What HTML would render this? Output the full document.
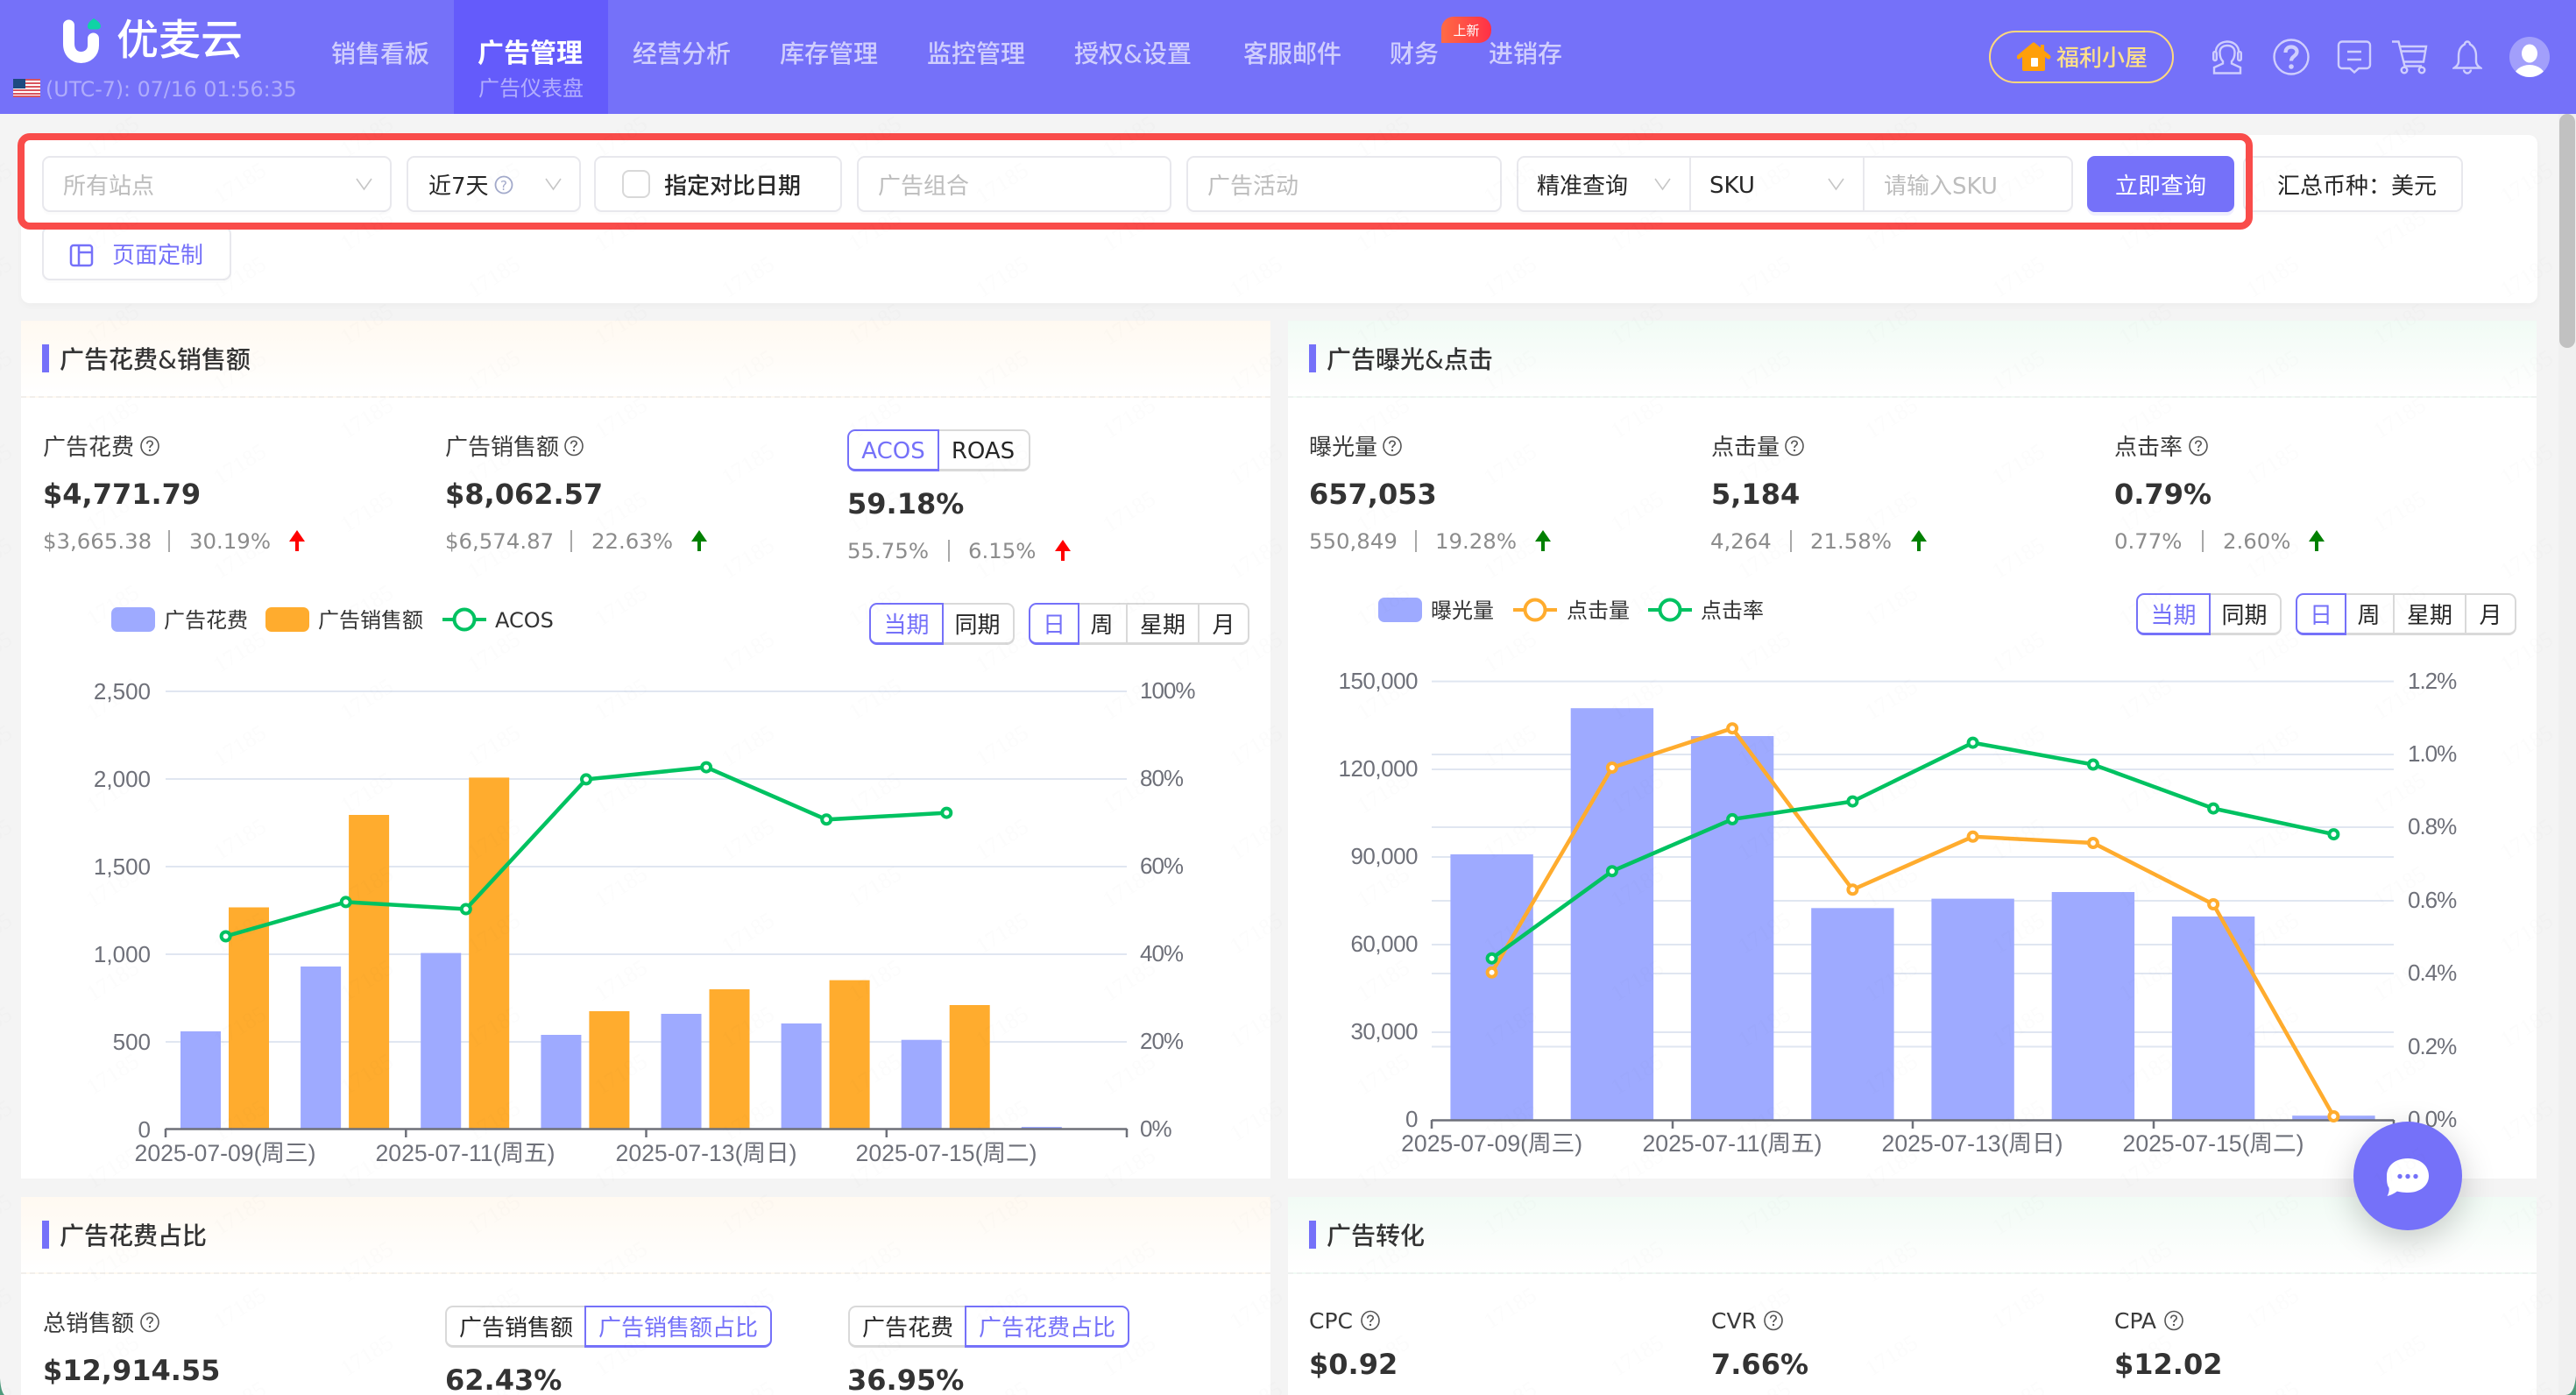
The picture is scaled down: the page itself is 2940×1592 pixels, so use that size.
<!DOCTYPE html>
<html lang="zh"><head><meta charset="utf-8"><title>优麦云 广告仪表盘</title>
<style>
*{box-sizing:border-box;margin:0;padding:0}
html,body{width:2940px;height:1592px;overflow:hidden;background:#f4f4f4}
body{position:relative;font-family:"DejaVu Sans","Noto Sans CJK SC",sans-serif;color:#262626}
.a{position:absolute;white-space:nowrap}
.c{position:absolute;display:flex;align-items:center;justify-content:center;white-space:nowrap}
.l{position:absolute;display:flex;align-items:center;white-space:nowrap}
.hdr{left:0;top:0;width:2940px;height:130px;background:#7571f9}
.nav{font-size:28px;font-weight:500;color:rgba(255,255,255,.66);top:42px;height:40px;line-height:40px}
.box{position:absolute;background:#fff;border:2px solid #e8e8ed;border-radius:9px;font-size:26px;display:flex;align-items:center;white-space:nowrap;box-shadow:0 3px 0 rgba(0,0,0,.012)}
.ph{color:#bdbdbd}
.card{position:absolute;background:#fff}
.phead{position:absolute;left:0;top:0;width:100%;height:88px;border-bottom:2px dashed #f2efeb}
.bar{position:absolute;left:24px;top:27px;width:8px;height:32px;background:#7571f9}
.title{position:absolute;left:44px;top:25px;height:40px;line-height:40px;font-size:28px;font-weight:500;color:#333;white-space:nowrap}
.tg{position:absolute;background:#fff;border:2px solid #d9d9d9;font-size:26px;display:flex;align-items:center;justify-content:center;white-space:nowrap;color:#262626;border-bottom-width:3px}
.on{border-color:#7571f9;color:#7571f9;z-index:2}
svg{position:absolute;left:0;top:0}
.chev{position:absolute;width:20px;height:14px}
</style></head><body>

<div class="a hdr"></div>
<div class="a" style="left:518px;top:0;width:176px;height:130px;background:#645bfb"></div>

<svg width="130" height="130" style="left:0;top:0">
<path d="M78.500 29V50C78.500 60 85 65.500 92.500 65.500C100 65.500 106.500 60 106.500 52V44" fill="none" stroke="#fff" stroke-width="13" stroke-linecap="round"/>
<path d="M107 21C110 23 115 26 115 30C115 32 113 33.500 111 33.500H103C101 33.500 100 32 100 30C100 26 104 23 107 21Z" fill="#0fd3a5"/>
</svg>
<div class="a" style="left:133px;top:14px;font-size:48px;line-height:64px;color:#fff;font-weight:500">优麦云</div>
<svg width="50" height="24" style="left:15px;top:90px">
<rect width="31" height="21" fill="#fff"/><g fill="#d8555f"><rect y="0" width="31" height="2"/><rect y="4" width="31" height="2"/><rect y="8" width="31" height="2"/><rect y="12" width="31" height="2"/><rect y="16" width="31" height="2"/><rect y="19" width="31" height="2"/></g><rect width="14" height="11" fill="#1d4a80"/>
</svg>
<div class="a" style="left:52px;top:86px;font-size:23.700px;line-height:32px;color:rgba(255,255,255,.42)">(UTC-7): 07/16 01:56:35</div>

<div class="a nav" style="left:378px">销售看板</div>
<div class="a" style="left:545px;top:42px;font-size:30px;line-height:40px;font-weight:700;color:#fff">广告管理</div>
<div class="a" style="left:546px;top:85px;font-size:24px;line-height:32px;color:rgba(255,255,255,.5)">广告仪表盘</div>
<div class="a nav" style="left:722px">经营分析</div>
<div class="a nav" style="left:890px">库存管理</div>
<div class="a nav" style="left:1058px">监控管理</div>
<div class="a nav" style="left:1226px">授权&amp;设置</div>
<div class="a nav" style="left:1419px">客服邮件</div>
<div class="a nav" style="left:1586px">财务</div>
<div class="a nav" style="left:1699px">进销存</div>
<div class="c" style="left:1645px;top:19px;width:57px;height:30px;background:linear-gradient(90deg,#ff6b45,#ff3046);border-radius:14px 14px 14px 0;color:#fff;font-size:15px">上新</div>

<div class="a" style="left:2270px;top:35px;width:211px;height:60px;border:2px solid #ffd97d;border-radius:30px"></div>
<svg width="40" height="36" style="left:2302px;top:48px">
<rect x="6" y="12" width="26" height="21" rx="2" fill="#ff9f0a"/>
<path d="M2 17L19 3L36 17" fill="none" stroke="#ff9f0a" stroke-width="5" stroke-linecap="round" stroke-linejoin="round"/>
<path d="M6 14L19 3L32 14Z" fill="#ff9f0a"/><rect x="27" y="3" width="4" height="8" fill="#ff9f0a"/>
<rect x="16" y="18" width="8" height="10" rx="1" fill="#fff"/>
</svg>
<div class="a" style="left:2347px;top:47px;font-size:26px;line-height:40px;color:#ffe08a;font-weight:500">福利小屋</div>

<svg width="34" height="39" viewBox="0 0 34 39" style="left:2525px;top:46px" fill="none" stroke="#cfcefd" stroke-width="2.400">
<path d="M4 13C4 6 10 1.500 17 1.500C24 1.500 30 6 30 13"/>
<path d="M8.500 14C8.500 8.500 12 6 17 6C22 6 25.500 8.500 25.500 14C25.500 19 24 22 22 24V26.500L32 31V37.500H2V31L12 26.500V24C10 22 8.500 19 8.500 14Z"/>
<rect x="1.200" y="13" width="3.600" height="10" rx="1.800"/><rect x="29.200" y="13" width="3.600" height="10" rx="1.800"/>
</svg>
<svg width="42" height="42" viewBox="0 0 42 42" style="left:2594px;top:44px" fill="none" stroke="#cfcefd">
<circle cx="21" cy="21" r="19.500" stroke-width="2.400"/>
<path d="M14.500 16C14.500 11.500 17.500 9.500 21 9.500C25 9.500 27.500 12 27.500 15C27.500 20 21 20 21 25.500" stroke-width="4.200"/>
<circle cx="21" cy="32" r="2.800" fill="#cfcefd" stroke="none"/>
</svg>
<svg width="40" height="38" viewBox="0 0 40 38" style="left:2667px;top:46px" fill="none" stroke="#cfcefd" stroke-width="2.400">
<path d="M6 1.500H34A4 4 0 0 1 38 5.500V28A4 4 0 0 1 34 32H25L20 36.500L15 32H6A4 4 0 0 1 2 28V5.500A4 4 0 0 1 6 1.500Z"/>
<path d="M12 13H28M12 22H28"/>
</svg>
<svg width="41" height="39" viewBox="0 0 41 39" style="left:2730px;top:46px" fill="none" stroke="#cfcefd" stroke-width="2.400">
<path d="M0 1.500H7.500L14.500 29.500H34"/><path d="M9 7H39L36 24.500H13.500"/><path d="M10.500 12.500H38"/>
<circle cx="14" cy="34" r="3.300"/><circle cx="34" cy="34" r="3.300"/>
</svg>
<svg width="34" height="39" viewBox="0 0 34 39" style="left:2799px;top:46px" fill="none" stroke="#cfcefd" stroke-width="2.400">
<path d="M17 1.500A3 3 0 0 1 20 4.500C25 7 27 12 27 18V24C27 28 30 30 32 31.500H2C4 30 7 28 7 24V18C7 12 9 7 14 4.500A3 3 0 0 1 17 1.500Z"/>
<path d="M13 33.500A4 4 0 0 0 21 33.500"/>
</svg>
<svg width="48" height="48" style="left:2864px;top:41px">
<defs><clipPath id="av"><circle cx="23" cy="24" r="23"/></clipPath></defs>
<circle cx="23" cy="24" r="23" fill="rgba(255,255,255,.33)"/>
<ellipse cx="23" cy="20" rx="9" ry="10.500" fill="#fff"/>
<ellipse cx="23" cy="47" rx="18" ry="14" fill="#fff" clip-path="url(#av)"/>
</svg>

<!-- scrollbar -->
<div class="a" style="left:2920px;top:130px;width:20px;height:1462px;background:#f0f0f0"></div>
<div class="a" style="left:2921px;top:130px;width:18px;height:267px;background:#c1c1c1;border-radius:9px"></div>

<!-- filter card -->
<div class="card" style="left:24px;top:154px;width:2872px;height:192px;border-radius:10px;box-shadow:0 3px 8px rgba(0,0,0,.03)"></div>

<div class="box ph" style="left:48px;top:178px;width:399px;height:64px;padding-left:22px">所有站点</div>
<div class="box" style="left:464px;top:178px;width:199px;height:64px;padding-left:23px">近7天</div>
<div class="box" style="left:678px;top:178px;width:283px;height:64px;padding-left:78px;font-weight:500">指定对比日期</div>
<div class="a" style="left:710px;top:194px;width:32px;height:32px;border:2px solid #d8d8d8;border-radius:8px;background:#fff"></div>
<div class="box ph" style="left:978px;top:178px;width:359px;height:64px;padding-left:22px">广告组合</div>
<div class="box ph" style="left:1354px;top:178px;width:360px;height:64px;padding-left:22px">广告活动</div>
<div class="box" style="left:1731px;top:178px;width:635px;height:64px"></div>
<div class="l" style="left:1754px;top:178px;height:64px;font-size:26px">精准查询</div>
<div class="a" style="left:1928px;top:179px;width:2px;height:62px;background:#e8e8ed"></div>
<div class="l" style="left:1951px;top:180px;height:64px;font-size:26px">SKU</div>
<div class="a" style="left:2126px;top:179px;width:2px;height:62px;background:#e8e8ed"></div>
<div class="l ph" style="left:2150px;top:178px;height:64px;font-size:26px">请输入SKU</div>
<div class="c" style="left:2382px;top:178px;width:168px;height:64px;background:#7571f9;color:#fff;border-radius:9px;font-size:26px;box-shadow:0 4px 0 #f0effe">立即查询</div>
<div class="box" style="left:2560px;top:178px;width:251px;height:64px;padding-left:37px">汇总币种：美元</div>

<div class="box" style="left:48px;top:258px;width:216px;height:62px;padding-left:78px;color:#7571f9;font-size:26px">页面定制</div>
<svg width="28" height="28" style="left:79px;top:277px" fill="none" stroke="#7571f9" stroke-width="2.500">
<rect x="2" y="3" width="24" height="23" rx="3"/><path d="M11 3V26M11 11H26"/>
</svg>

<svg width="2940" height="300" style="top:0;left:0;pointer-events:none" fill="none" stroke="#c6c6c6" stroke-width="1.600">
<path d="M407 204L415.500 216L424 204"/><path d="M623 204L631.500 216L640 204"/><path d="M1889 204L1897.500 216L1906 204"/><path d="M2087 204L2095.500 216L2104 204"/>
<circle cx="575" cy="211" r="9.500" stroke="#a3aacb" stroke-width="1.800"/>
<text x="575" y="217" text-anchor="middle" font-size="15" fill="#a3aacb" stroke="none" font-family="DejaVu Sans">?</text>
</svg>

<!-- red annotation -->
<div class="a" style="left:20px;top:152px;width:2551px;height:110px;border:8px solid #f94c4a;border-radius:14px;z-index:5"></div>

<!-- panels -->
<div class="card" style="left:24px;top:366px;width:1426px;height:979px">
 <div class="phead" style="background:linear-gradient(180deg,#fff9f1,#fffefc 80%,#fff)"></div><div class="bar"></div><div class="title">广告花费&amp;销售额</div>
</div>
<div class="card" style="left:1470px;top:366px;width:1425px;height:979px">
 <div class="phead" style="background:linear-gradient(180deg,#f1fbf5,#fdfefd 80%,#fff);border-bottom-color:#eef2f0"></div><div class="bar"></div><div class="title">广告曝光&amp;点击</div>
</div>
<div class="card" style="left:24px;top:1366px;width:1426px;height:226px">
 <div class="phead" style="background:linear-gradient(180deg,#fff9f1,#fffefc 80%,#fff)"></div><div class="bar"></div><div class="title">广告花费占比</div>
</div>
<div class="card" style="left:1470px;top:1366px;width:1425px;height:226px">
 <div class="phead" style="background:linear-gradient(180deg,#f1fbf5,#fdfefd 80%,#fff);border-bottom-color:#eef2f0"></div><div class="bar"></div><div class="title">广告转化</div>
</div>

<!-- toggles -->
<div class="tg on" style="left:967px;top:490px;width:105px;height:48px;border-radius:9px 0 0 9px;padding-top:2px">ACOS</div>
<div class="tg" style="left:1070px;top:490px;width:106px;height:48px;border-radius:0 9px 9px 0;border-left:0;padding-top:2px">ROAS</div>

<div class="tg on" style="left:992px;top:688px;width:85px;height:48px;border-radius:9px 0 0 9px">当期</div>
<div class="tg" style="left:1075px;top:688px;width:83px;height:48px;border-radius:0 9px 9px 0;border-left:0">同期</div>
<div class="tg on" style="left:1174px;top:688px;width:58px;height:48px;border-radius:9px 0 0 9px">日</div>
<div class="tg" style="left:1230px;top:688px;width:57px;height:48px;border-left:0">周</div>
<div class="tg" style="left:1287px;top:688px;width:82px;height:48px;border-left:0">星期</div>
<div class="tg" style="left:1369px;top:688px;width:57px;height:48px;border-radius:0 9px 9px 0;border-left:0">月</div>

<div class="tg on" style="left:2438px;top:677px;width:85px;height:48px;border-radius:9px 0 0 9px">当期</div>
<div class="tg" style="left:2521px;top:677px;width:83px;height:48px;border-radius:0 9px 9px 0;border-left:0">同期</div>
<div class="tg on" style="left:2620px;top:677px;width:58px;height:48px;border-radius:9px 0 0 9px">日</div>
<div class="tg" style="left:2676px;top:677px;width:57px;height:48px;border-left:0">周</div>
<div class="tg" style="left:2733px;top:677px;width:82px;height:48px;border-left:0">星期</div>
<div class="tg" style="left:2815px;top:677px;width:57px;height:48px;border-radius:0 9px 9px 0;border-left:0">月</div>

<div class="tg" style="left:508px;top:1490px;width:160px;height:48px;border-radius:9px 0 0 9px;border-right:0">广告销售额</div>
<div class="tg on" style="left:667px;top:1490px;width:214px;height:48px;border-radius:0 9px 9px 0">广告销售额占比</div>
<div class="tg" style="left:968px;top:1490px;width:134px;height:48px;border-radius:9px 0 0 9px;border-right:0">广告花费</div>
<div class="tg on" style="left:1101px;top:1490px;width:188px;height:48px;border-radius:0 9px 9px 0">广告花费占比</div>

<!-- metrics and charts -->
<svg width="2940" height="1592" viewBox="0 0 2940 1592" style="z-index:3;pointer-events:none" font-family="'DejaVu Sans','Noto Sans CJK SC',sans-serif">
<defs>
<symbol id="q" viewBox="0 0 22 24" overflow="visible"><ellipse cx="11" cy="12" rx="10" ry="10.500" fill="none" stroke="#555" stroke-width="1.600"/><path d="M7.800 9.500C7.800 7.300 9.300 6.300 11 6.300C12.900 6.300 14.200 7.500 14.200 9C14.200 11.400 11 11.400 11 14" fill="none" stroke="#555" stroke-width="1.700"/><circle cx="11" cy="17" r="1.200" fill="#555"/></symbol>
<symbol id="up" viewBox="0 0 18 24" overflow="visible"><path d="M9 0L18 13H11V24H7V13H0Z" fill="currentColor"/></symbol>
</defs>

<g font-size="26" fill="#3a3a3a">
<text x="49" y="519">广告花费</text><text x="508" y="519">广告销售额</text>
<text x="1494" y="519">曝光量</text><text x="1953" y="519">点击量</text><text x="2413" y="519">点击率</text>
<text x="49" y="1519">总销售额</text>
<text x="1494" y="1516" font-size="25">CPC</text><text x="1953" y="1516" font-size="25">CVR</text><text x="2413" y="1516" font-size="25">CPA</text>
</g>
<g>
<use href="#q" x="160" y="497" width="22" height="24"/><use href="#q" x="644" y="497" width="22" height="24"/>
<use href="#q" x="1578" y="497" width="22" height="24"/><use href="#q" x="2037" y="497" width="22" height="24"/><use href="#q" x="2498" y="497" width="22" height="24"/>
<use href="#q" x="160" y="1497" width="22" height="24"/>
<use href="#q" x="1553" y="1495" width="22" height="24"/><use href="#q" x="2013" y="1495" width="22" height="24"/><use href="#q" x="2470" y="1495" width="22" height="24"/>
</g>

<g font-size="32" font-weight="700" fill="#333">
<text x="49" y="575">$4,771.79</text><text x="508" y="575">$8,062.57</text><text x="967" y="586">59.18%</text>
<text x="1494" y="575">657,053</text><text x="1953" y="575">5,184</text><text x="2413" y="575">0.79%</text>
<text x="49" y="1575">$12,914.55</text><text x="508" y="1586">62.43%</text><text x="967" y="1586">36.95%</text>
<text x="1494" y="1568">$0.92</text><text x="1953" y="1568">7.66%</text><text x="2413" y="1568">$12.02</text>
</g>

<g font-size="24.400" fill="#8c8c8c">
<text x="49" y="626">$3,665.38</text><text x="216" y="626">30.19%</text>
<text x="508" y="626">$6,574.87</text><text x="675" y="626">22.63%</text>
<text x="967" y="637">55.75%</text><text x="1105" y="637">6.15%</text>
<text x="1494" y="626">550,849</text><text x="1638" y="626">19.28%</text>
<text x="1952" y="626">4,264</text><text x="2066" y="626">21.58%</text>
<text x="2413" y="626">0.77%</text><text x="2537" y="626">2.60%</text>
</g>
<g stroke="#8c8c8c" stroke-width="1.500">
<path d="M193 605V630M652 605V630M1083 616V641M1616 605V630M2044 605V630M2514 605V630"/>
</g>
<g>
<use href="#up" x="330" y="605" width="18" height="24" color="#f00"/>
<use href="#up" x="789" y="605" width="18" height="24" color="#008000"/>
<use href="#up" x="1204" y="616" width="18" height="24" color="#f00"/>
<use href="#up" x="1752" y="605" width="18" height="24" color="#008000"/>
<use href="#up" x="2181" y="605" width="18" height="24" color="#008000"/>
<use href="#up" x="2635" y="605" width="18" height="24" color="#008000"/>
</g>

<!-- legend left -->
<g font-size="24" fill="#333">
<rect x="127" y="693" width="50" height="28" rx="7" fill="#9eaaff"/><text x="187" y="716">广告花费</text>
<rect x="303" y="693" width="50" height="28" rx="7" fill="#ffac2e"/><text x="363" y="716">广告销售额</text>
<path d="M505 707H555" stroke="#00c261" stroke-width="4"/><circle cx="530" cy="707" r="11.500" fill="#fff" stroke="#00c261" stroke-width="4"/><text x="565" y="716">ACOS</text>
</g>
<!-- legend right -->
<g font-size="24" fill="#333">
<rect x="1573" y="682" width="50" height="28" rx="7" fill="#9eaaff"/><text x="1633" y="705">曝光量</text>
<path d="M1727 696H1777" stroke="#ffac2e" stroke-width="4"/><circle cx="1752" cy="696" r="11.500" fill="#fff" stroke="#ffac2e" stroke-width="4"/><text x="1788" y="705">点击量</text>
<path d="M1881 696H1931" stroke="#00c261" stroke-width="4"/><circle cx="1906" cy="696" r="11.500" fill="#fff" stroke="#00c261" stroke-width="4"/><text x="1941" y="705">点击率</text>
</g>

<!-- chart 1 -->
<g stroke="#e0e6f1" stroke-width="2">
<path d="M189 789H1286M189 889H1286M189 989H1286M189 1089H1286M189 1189H1286"/>
</g>
<g fill="#9eaaff">
<rect x="206" y="1177" width="46" height="111"/><rect x="343.100" y="1103" width="46" height="185"/><rect x="480.200" y="1087.600" width="46" height="200.400"/><rect x="617.400" y="1181" width="46" height="107"/><rect x="754.500" y="1157" width="46" height="131"/><rect x="891.600" y="1168" width="46" height="120"/><rect x="1028.700" y="1186.700" width="46" height="101.300"/><rect x="1165.800" y="1286" width="46" height="2"/>
</g>
<g fill="#ffac2e">
<rect x="261" y="1035.500" width="46" height="252.500"/><rect x="398.100" y="930" width="46" height="358"/><rect x="535.200" y="887.400" width="46" height="400.600"/><rect x="672.400" y="1154" width="46" height="134"/><rect x="809.500" y="1129" width="46" height="159"/><rect x="946.600" y="1118.600" width="46" height="169.400"/><rect x="1083.700" y="1147" width="46" height="141"/>
</g>
<path d="M189 1288.500H1286M189 1288V1298M463.300 1288V1298M737.500 1288V1298M1011.800 1288V1298M1286 1288V1298" stroke="#6e7079" stroke-width="2.500" fill="none"/>
<path d="M257.600 1068.500L394.700 1029.400L531.800 1037.500L669 889.400L806.100 875.600L943.200 935.300L1080.300 927.600" fill="none" stroke="#00c261" stroke-width="4.500"/>
<g fill="#fff" stroke="#00c261" stroke-width="4">
<circle cx="257.600" cy="1068.500" r="5"/><circle cx="394.700" cy="1029.400" r="5"/><circle cx="531.800" cy="1037.500" r="5"/><circle cx="669" cy="889.400" r="5"/><circle cx="806.100" cy="875.600" r="5"/><circle cx="943.200" cy="935.300" r="5"/><circle cx="1080.300" cy="927.600" r="5"/>
</g>
<g font-family="'Liberation Sans','Noto Sans CJK SC',sans-serif" font-size="26" fill="#6e7079">
<g text-anchor="end"><text x="172" y="798">2,500</text><text x="172" y="898">2,000</text><text x="172" y="998">1,500</text><text x="172" y="1098">1,000</text><text x="172" y="1198">500</text><text x="172" y="1298">0</text></g>
<g letter-spacing="-1"><text x="1301" y="797">100%</text><text x="1301" y="897">80%</text><text x="1301" y="997">60%</text><text x="1301" y="1097">40%</text><text x="1301" y="1197">20%</text><text x="1301" y="1297">0%</text></g>
<g text-anchor="middle" font-size="26.600"><text x="257" y="1325">2025-07-09(周三)</text><text x="531" y="1325">2025-07-11(周五)</text><text x="806" y="1325">2025-07-13(周日)</text><text x="1080" y="1325">2025-07-15(周二)</text></g>
</g>

<!-- chart 2 -->
<g stroke="#e0e6f1" stroke-width="2">
<path d="M1634 777.600H2732M1634 861H2732M1634 878H2732M1634 944H2732M1634 978H2732M1634 1028H2732M1634 1078H2732M1634 1111H2732M1634 1178H2732M1634 1194.500H2732"/>
</g>
<g fill="#9eaaff">
<rect x="1655.400" y="975" width="94.400" height="303"/><rect x="1792.700" y="808.200" width="94.400" height="469.800"/><rect x="1929.900" y="840" width="94.400" height="438"/><rect x="2067.200" y="1036.300" width="94.400" height="241.700"/><rect x="2204.400" y="1025.600" width="94.400" height="252.400"/><rect x="2341.700" y="1018" width="94.400" height="260"/><rect x="2478.900" y="1045.900" width="94.400" height="232.100"/><rect x="2616.200" y="1273.200" width="94.400" height="4.800"/>
</g>
<path d="M1634 1278.500H2732M1634 1278V1288M1909 1278V1288M2183 1278V1288M2458 1278V1288M2732 1278V1288" stroke="#6e7079" stroke-width="2.500" fill="none"/>
<path d="M1702.600 1109.800L1839.900 876L1977.100 831.200L2114.400 1015.300L2251.600 954.800L2388.900 962L2526.100 1032L2663.400 1274" fill="none" stroke="#ffac2e" stroke-width="4.500"/>
<g fill="#fff" stroke="#ffac2e" stroke-width="4">
<circle cx="1702.600" cy="1109.800" r="5"/><circle cx="1839.900" cy="876" r="5"/><circle cx="1977.100" cy="831.200" r="5"/><circle cx="2114.400" cy="1015.300" r="5"/><circle cx="2251.600" cy="954.800" r="5"/><circle cx="2388.900" cy="962" r="5"/><circle cx="2526.100" cy="1032" r="5"/><circle cx="2663.400" cy="1274" r="5"/>
</g>
<path d="M1702.600 1093.700L1839.900 994.200L1977.100 934.900L2114.400 914.600L2251.600 847.600L2388.900 872.500L2526.100 922.600L2663.400 952.100" fill="none" stroke="#00c261" stroke-width="4.500"/>
<g fill="#fff" stroke="#00c261" stroke-width="4">
<circle cx="1702.600" cy="1093.700" r="5"/><circle cx="1839.900" cy="994.200" r="5"/><circle cx="1977.100" cy="934.900" r="5"/><circle cx="2114.400" cy="914.600" r="5"/><circle cx="2251.600" cy="847.600" r="5"/><circle cx="2388.900" cy="872.500" r="5"/><circle cx="2526.100" cy="922.600" r="5"/><circle cx="2663.400" cy="952.100" r="5"/>
</g>
<g font-family="'Liberation Sans','Noto Sans CJK SC',sans-serif" font-size="26" fill="#6e7079">
<g text-anchor="end" letter-spacing="-.5"><text x="1618" y="786">150,000</text><text x="1618" y="886">120,000</text><text x="1618" y="986">90,000</text><text x="1618" y="1086">60,000</text><text x="1618" y="1186">30,000</text><text x="1618" y="1286">0</text></g>
<g letter-spacing="-1"><text x="2748" y="786">1.2%</text><text x="2748" y="869">1.0%</text><text x="2748" y="952">0.8%</text><text x="2748" y="1036">0.6%</text><text x="2748" y="1119">0.4%</text><text x="2748" y="1203">0.2%</text><text x="2748" y="1286">0.0%</text></g>
<g text-anchor="middle" font-size="26.600"><text x="1702.600" y="1314">2025-07-09(周三)</text><text x="1977" y="1314">2025-07-11(周五)</text><text x="2251" y="1314">2025-07-13(周日)</text><text x="2526" y="1314">2025-07-15(周二)</text></g>
</g>
</svg>

<!-- chat -->
<div class="a" style="left:2686px;top:1280px;width:124px;height:124px;border-radius:50%;background:#7571f9;box-shadow:0 12px 40px rgba(0,0,0,.2);z-index:6"></div>
<svg width="124" height="124" style="left:2686px;top:1280px;z-index:7">
<path d="M62 42C76 42 86 50 86 62C86 73 76 81 62 81C58 81 53 80.500 50 79.500C47 81.500 43 84 38.500 85C40.500 81.500 41 78 40.500 75.500C38 72 38 67 38 62C38 50 48 42 62 42Z" fill="#fff"/>
<circle cx="53" cy="62.500" r="2.700" fill="#7571f9"/><circle cx="62" cy="62.500" r="2.700" fill="#7571f9"/><circle cx="71" cy="62.500" r="2.700" fill="#7571f9"/>
</svg>

<!-- watermark -->
<svg width="2940" height="1592" style="z-index:8;pointer-events:none">
<defs><pattern id="wm" patternUnits="userSpaceOnUse" width="290" height="107">
<g font-family="'Liberation Serif',serif" font-size="26" fill="#000" fill-opacity=".01" text-anchor="middle">
<text transform="translate(133 56) rotate(-32)">17185</text>
<text transform="translate(278 2) rotate(-32)">17185</text>
<text transform="translate(278 109) rotate(-32)">17185</text>
<text transform="translate(-12 2) rotate(-32)">17185</text>
<text transform="translate(-12 109) rotate(-32)">17185</text>
</g></pattern></defs>
<rect y="130" width="2940" height="1462" fill="url(#wm)"/>
<path d="M0 1573Q1 1588 5 1592H0Z" fill="#4f9a7c"/>
<path d="M2940 1570Q2938 1592 2928 1592H2940Z" fill="#4f9a7c"/>
</svg>
</body></html>
